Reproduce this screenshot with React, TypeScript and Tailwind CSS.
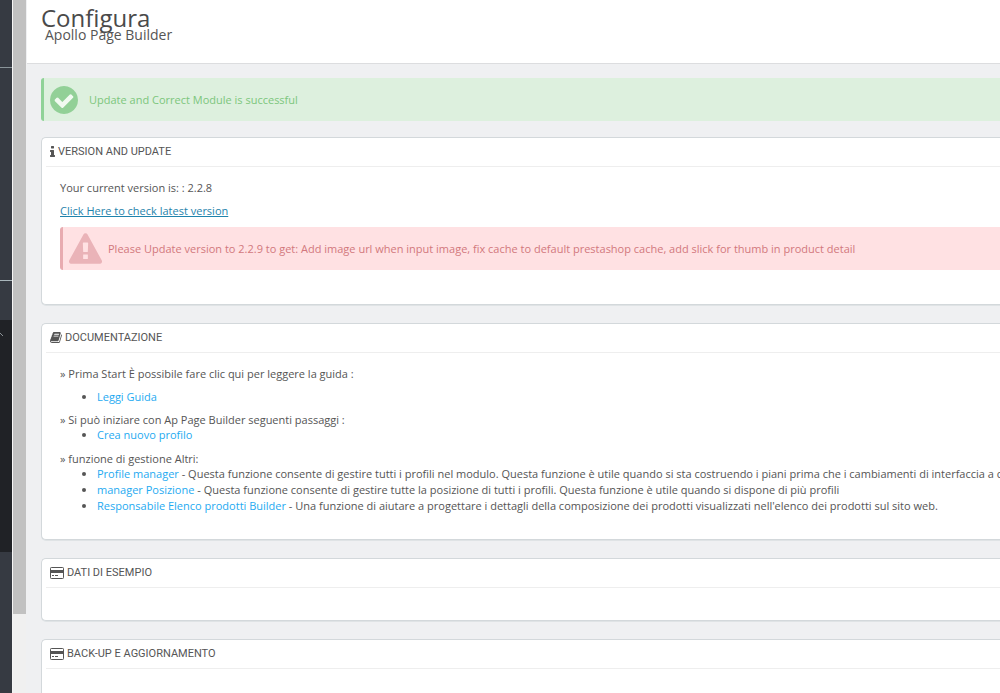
import type { ReactNode } from "react";
import clsx from "clsx";

type IconProps = { className?: string };

function CheckCircleIcon({ className }: IconProps) {
  return (
    <svg viewBox="128 128 1536 1536" fill="currentColor" aria-hidden="true" className={className}>
      <path d="M1412 734q0-28-18-46l-91-90q-19-19-45-19t-45 19l-408 407-226-226q-19-19-45-19t-45 19l-91 90q-18 18-18 46 0 27 18 45l362 362q19 19 45 19 27 0 46-19l543-543q18-18 18-45z" fill="#f1faf1" />
      <path d="M1412 734q0-28-18-46l-91-90q-19-19-45-19t-45 19l-408 407-226-226q-19-19-45-19t-45 19l-91 90q-18 18-18 46 0 27 18 45l362 362q19 19 45 19 27 0 46-19l543-543q18-18 18-45zm252 162q0 209-103 385.5t-279.5 279.5-385.5 103-385.5-103-279.5-279.5-103-385.5 103-385.5 279.5-279.5 385.5-103 385.5 103 279.5 279.5 103 385.5z" />
    </svg>
  );
}

function WarningIcon({ className }: IconProps) {
  return (
    <svg viewBox="0 0 1792 1664" fill="currentColor" aria-hidden="true" className={className}>
      <path d="M1024 1375v-190q0-14-9.5-23.5t-22.5-9.5h-192q-13 0-22.5 9.5t-9.5 23.5v190q0 14 9.5 23.5t22.5 9.5h192q13 0 22.5-9.5t9.5-23.5zm-2-374l18-459q0-12-10-19-13-11-24-11h-220q-11 0-24 11-10 7-10 21l17 457q0 10 10 16.5t24 6.5h185q14 0 23.5-6.5t10.5-16.5zm-14-934l768 1408q35 63-2 126-17 29-46.5 46t-63.5 17h-1536q-34 0-63.5-17t-46.5-46q-37-63-2-126l768-1408q17-31 47-49t65-18 65 18 47 49z" />
    </svg>
  );
}

function InfoIcon() {
  return (
    <svg viewBox="576 128 640 1408" fill="currentColor" aria-hidden="true" className="h-[11px] w-[5px]">
      <path d="M1216 1344v128q0 26-19 45t-45 19h-512q-26 0-45-19t-19-45v-128q0-26 19-45t45-19h64v-384h-64q-26 0-45-19t-19-45v-128q0-26 19-45t45-19h384q26 0 45 19t19 45v576h64q26 0 45 19t19 45zm-128-1152v192q0 26-19 45t-45 19h-256q-26 0-45-19t-19-45v-192q0-26 19-45t45-19h256q26 0 45 19t19 45z" />
    </svg>
  );
}

function BookIcon() {
  return (
    <svg viewBox="64 128 1664 1536" fill="currentColor" aria-hidden="true" className="h-[11px] w-3">
      <path d="M1703 478q40 57 18 129l-275 906q-19 64-76.5 107.5t-122.5 43.5h-923q-77 0-148.5-53.5t-99.5-131.5q-24-67-2-127 0-4 3-27t4-37q1-8-3-21.5t-3-19.5q2-11 8-21t16.5-23.5 16.5-23.5q23-38 45-91.5t30-91.5q3-10 .5-30t-.5-28q3-11 17-28t17-23q21-36 42-92t25-90q1-9-2.5-32t.5-28q4-13 22-30.5t22-22.5q19-26 42.5-84.5t27.5-96.5q1-8-3-25.5t-2-26.5q2-8 9-18t18-23 17-21q8-12 16.5-30.5t15-35 16-36 19.5-32 26.5-23.5 36-11.5 47.5 5.5l-1 3q38-9 51-9h761q74 0 114 56t18 130l-274 906q-36 119-71.5 153.5t-128.5 34.5h-869q-27 0-38 15-11 16-1 43 24 70 144 70h923q29 0 56-15.5t35-41.5l300-987q7-22 5-57 38 15 59 43zm-1064 2q-4 13 2 22.5t20 9.5h608q13 0 25.5-9.5t16.5-22.5l21-64q4-13-2-22.5t-20-9.5h-608q-13 0-25.5 9.5t-16.5 22.5zm-83 256q-4 13 2 22.5t20 9.5h608q13 0 25.5-9.5t16.5-22.5l21-64q4-13-2-22.5t-20-9.5h-608q-13 0-25.5 9.5t-16.5 22.5z" />
    </svg>
  );
}

function CreditCardIcon() {
  return (
    <svg viewBox="0 0 14 12" fill="none" aria-hidden="true" className="h-3 w-3.5">
      <rect x="0.5" y="0.5" width="13" height="11" rx="0.8" stroke="currentColor" />
      <path d="M1 3h12v3H1zM2 8h2v1H2zM5 8h3v1H5z" fill="currentColor" />
    </svg>
  );
}

type AlertProps = { type: "success" | "danger"; children: ReactNode };

function Alert({ type, children }: AlertProps) {
  const success = type === "success";
  return (
    <div
      role="alert"
      className={clsx(
        "flex h-[43px] items-center rounded-l-[3px] border-l-3 pl-1.5",
        success
          ? "gap-[11px] border-[#8fd297] bg-[#ddf0de] text-[#7cc67c]"
          : "gap-1.5 border-[#e8abb0] bg-[#ffe1e3] text-[#d2787d]"
      )}
    >
      {success ? (
        <CheckCircleIcon className="size-7 text-[#92d097]" />
      ) : (
        <WarningIcon className="h-[31px] w-[33px] text-[#eab3b8]" />
      )}
      <span>{children}</span>
    </div>
  );
}

type PanelProps = { icon: ReactNode; title: string; className?: string; children?: ReactNode };

function Panel({ icon, title, className, children }: PanelProps) {
  return (
    <section className="rounded-l-[5px] border border-r-0 border-[#d3d8db] bg-white pl-1 shadow-[0_1px_0_#dfe3e5]">
      <h3 className="flex h-[29px] items-center gap-[3px] border-b border-[#eee] pb-px pl-1 font-['Ubuntu_Condensed','Roboto',sans-serif] text-[11px] uppercase">
        {icon}
        {title}
      </h3>
      <div className={clsx("pl-3.5", className)}>{children}</div>
    </section>
  );
}

const features = [
  {
    name: "Profile manager",
    text: "Questa funzione consente di gestire tutti i profili nel modulo. Questa funzione è utile quando si sta costruendo i piani prima che i cambiamenti di interfaccia a causa",
  },
  {
    name: "manager Posizione",
    text: "Questa funzione consente di gestire tutte la posizione di tutti i profili. Questa funzione è utile quando si dispone di più profili",
  },
  {
    name: "Responsabile Elenco prodotti Builder",
    text: "Una funzione di aiutare a progettare i dettagli della composizione dei prodotti visualizzati nell'elenco dei prodotti sul sito web.",
  },
];

function Sidebar() {
  return (
    <aside className="flex w-3 shrink-0 flex-col bg-[#363a42]">
      <div className="h-[68px] border-b border-[#8a9499]" />
      <div className="h-[213px] border-b border-[#a9b6bb]" />
      <div className="h-[39px]" />
      <div className="h-[232px] overflow-hidden bg-[#202226] pt-3">
        <svg viewBox="0 0 4 5" fill="none" aria-hidden="true" className="h-[5px] w-1">
          <path d="M0 1l3 3" stroke="#8b9296" />
        </svg>
      </div>
    </aside>
  );
}

export default function App() {
  return (
    <div className="flex h-screen overflow-hidden bg-[#eff0f2] font-['Open_Sans',sans-serif] text-[11px] leading-[15px] text-[#555]">
      <Sidebar />
      <div className="w-3.5 shrink-0 border-l border-[#f5f5f5] bg-[#f0f0f0]">
        <div className="h-[614px] bg-[#c1c1c1]" />
      </div>

      <div className="min-w-0 flex-1 overflow-hidden whitespace-nowrap">
        <header className="ml-px h-16 border-b border-[#dcdddf] bg-white pt-1 pl-3.5">
          <h1 className="text-2xl leading-7 text-[#4a4a4a]">Configura</h1>
          <h2 className="-mt-1 pl-1 text-sm leading-3.5">Apollo Page Builder</h2>
        </header>

        <main className="flex flex-col gap-[18px] pt-3.5 pl-[15px]">
          <div className="-mb-0.5">
            <Alert type="success">Update and Correct Module is successful</Alert>
          </div>

          <Panel icon={<InfoIcon />} title="Version and Update" className="pt-[13px] pb-[34px]">
            <p>Your current version is: : 2.2.8</p>
            <p className="mt-2 mb-[9px]">
              <a href="#" className="text-[#1f83ac] underline">
                Click Here to check latest version
              </a>
            </p>
            <Alert type="danger">
              Please Update version to 2.2.9 to get: Add image url when input image, fix cache to
              default prestashop cache, add slick for thumb in product detail
            </Alert>
          </Panel>

          <Panel icon={<BookIcon />} title="Documentazione" className="pt-[13px] pb-[25px]">
            <p>» Prima Start È possibile fare clic qui per leggere la guida :</p>
            <ul className="my-2 list-disc pl-[37px]">
              <li>
                <a href="#" className="text-[#1eaaf1]">Leggi Guida</a>
              </li>
            </ul>
            <p>» Si può iniziare con Ap Page Builder seguenti passaggi :</p>
            <ul className="mb-[9px] list-disc pl-[37px]">
              <li>
                <a href="#" className="text-[#1eaaf1]">Crea nuovo profilo</a>
              </li>
            </ul>
            <p>» funzione di gestione Altri:</p>
            <ul className="list-disc pl-[37px] leading-4">
              {features.map((f) => (
                <li key={f.name}>
                  <a href="#" className="text-[#1eaaf1]">{f.name}</a> - {f.text}
                </li>
              ))}
            </ul>
          </Panel>

          <Panel icon={<CreditCardIcon />} title="Dati di esempio" className="h-8" />
          <Panel icon={<CreditCardIcon />} title="Back-up e aggiornamento" className="h-16" />
        </main>
      </div>
    </div>
  );
}
